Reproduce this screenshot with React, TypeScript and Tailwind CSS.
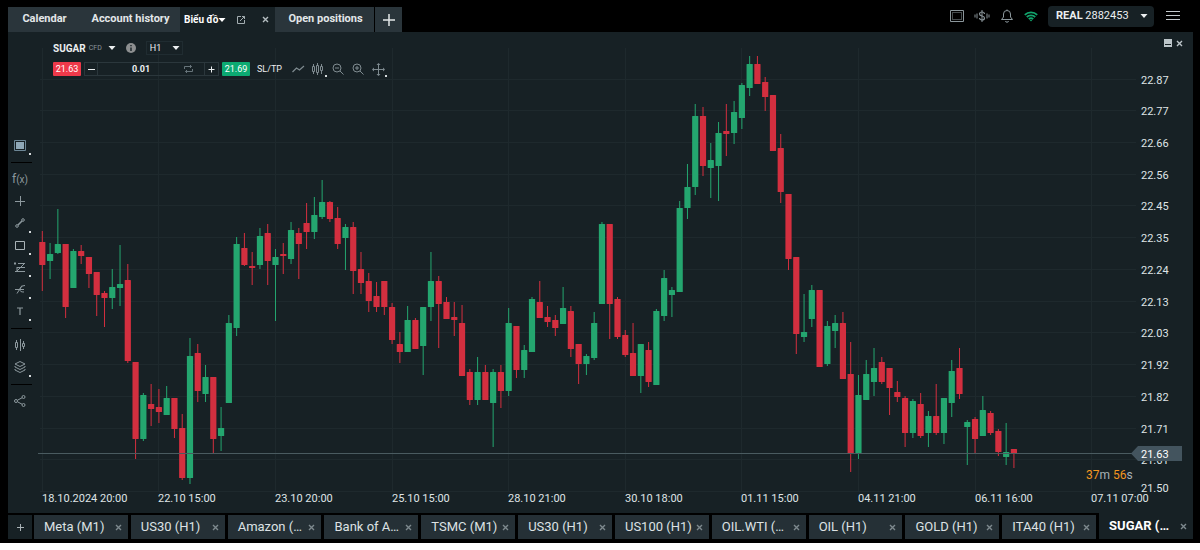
import { ReactNode } from 'react';

type Candle = [dir: 'u' | 'd', high: number, top: number, bottom: number, low: number];

const CANDLES: Candle[] = [
  ['d', 231, 242, 265, 291], ['u', 243, 254, 261, 279], ['u', 209, 244, 253, 254], ['d', 244, 244, 307, 318],
  ['u', 249, 251, 288, 288], ['d', 245, 251, 256, 264], ['d', 257, 257, 274, 288], ['d', 272, 272, 295, 316],
  ['d', 291, 293, 298, 327], ['u', 269, 287, 298, 309], ['u', 245, 284, 288, 306], ['d', 264, 280, 361, 363],
  ['d', 362, 362, 439, 459], ['u', 393, 395, 439, 441], ['d', 384, 404, 409, 426], ['d', 389, 407, 412, 423],
  ['u', 386, 398, 415, 415], ['d', 398, 398, 429, 438], ['d', 414, 428, 478, 480], ['u', 338, 356, 478, 484],
  ['d', 344, 353, 391, 402], ['u', 365, 377, 394, 402], ['d', 377, 377, 439, 454], ['u', 407, 428, 436, 451],
  ['u', 315, 323, 403, 403], ['u', 237, 244, 328, 336], ['d', 233, 248, 265, 266], ['d', 252, 266, 268, 285],
  ['u', 228, 236, 265, 269], ['d', 224, 233, 261, 285], ['u', 249, 257, 265, 321], ['d', 243, 254, 256, 274],
  ['u', 222, 230, 259, 264], ['d', 228, 233, 244, 279], ['d', 203, 223, 232, 249], ['u', 197, 215, 232, 239],
  ['u', 180, 202, 217, 219], ['d', 201, 202, 219, 222], ['d', 207, 218, 244, 249], ['u', 224, 227, 238, 270],
  ['d', 222, 227, 271, 294], ['d', 252, 269, 283, 294], ['d', 273, 281, 301, 312], ['d', 282, 296, 307, 312],
  ['d', 281, 281, 307, 315], ['d', 303, 307, 340, 344], ['d', 332, 344, 352, 363], ['u', 306, 320, 352, 352],
  ['d', 318, 320, 349, 349], ['u', 307, 307, 346, 375], ['u', 252, 281, 307, 321], ['d', 276, 281, 304, 348],
  ['d', 297, 302, 319, 319], ['d', 302, 317, 320, 336], ['d', 305, 323, 376, 376], ['d', 369, 372, 400, 405],
  ['u', 357, 372, 400, 405], ['d', 365, 372, 400, 400], ['u', 369, 372, 403, 447], ['d', 365, 372, 391, 408],
  ['u', 308, 323, 391, 396], ['d', 326, 326, 370, 378], ['u', 345, 350, 370, 378], ['u', 297, 299, 352, 352],
  ['d', 281, 302, 318, 318], ['d', 306, 317, 322, 327], ['d', 315, 320, 328, 336], ['u', 287, 308, 324, 324],
  ['d', 306, 311, 349, 357], ['d', 344, 344, 364, 384], ['u', 354, 356, 364, 375], ['u', 312, 323, 358, 360],
  ['u', 222, 224, 304, 304], ['d', 224, 224, 304, 339], ['d', 297, 299, 337, 339], ['d', 330, 335, 355, 357],
  ['d', 323, 353, 376, 376], ['u', 344, 344, 376, 393], ['d', 342, 350, 382, 387], ['u', 309, 311, 385, 385],
  ['u', 270, 278, 316, 321], ['u', 287, 290, 295, 317], ['u', 201, 208, 292, 292], ['u', 164, 187, 208, 219],
  ['u', 104, 116, 187, 195], ['d', 107, 116, 166, 176], ['u', 143, 160, 168, 198], ['u', 122, 133, 166, 201],
  ['d', 104, 131, 134, 156], ['u', 101, 112, 133, 144], ['u', 83, 85, 118, 129], ['u', 56, 64, 88, 96],
  ['d', 56, 64, 84, 84], ['d', 77, 82, 97, 111], ['d', 95, 95, 151, 151], ['d', 134, 148, 192, 203],
  ['d', 194, 194, 259, 270], ['d', 257, 257, 334, 354], ['u', 294, 332, 337, 342], ['u', 285, 290, 319, 327],
  ['d', 290, 290, 367, 367], ['u', 321, 326, 364, 366], ['u', 315, 323, 331, 348], ['d', 312, 323, 379, 379],
  ['d', 342, 374, 454, 472], ['u', 375, 395, 453, 459], ['u', 360, 374, 400, 400], ['u', 348, 368, 382, 396],
  ['d', 357, 362, 382, 384], ['d', 368, 368, 388, 415], ['d', 381, 392, 397, 402], ['d', 396, 398, 433, 447],
  ['u', 399, 401, 433, 438], ['d', 393, 404, 436, 438], ['u', 411, 416, 433, 447], ['d', 384, 416, 433, 435],
  ['u', 398, 398, 433, 444], ['u', 360, 371, 403, 417], ['d', 348, 368, 394, 399], ['u', 420, 422, 427, 465],
  ['d', 417, 419, 439, 453], ['u', 396, 410, 436, 436], ['d', 411, 413, 433, 435], ['d', 429, 431, 452, 456],
  ['u', 423, 452, 457, 465], ['d', 449, 449, 454, 468],
];

const PRICES = ['22.87', '22.77', '22.66', '22.56', '22.45', '22.35', '22.24', '22.13', '22.03', '21.92', '21.82', '21.71', '21.61'];

const TIMES = [
  '18.10.2024 20:00', '22.10 15:00', '23.10 20:00', '25.10 15:00', '28.10 21:00',
  '30.10 18:00', '01.11 15:00', '04.11 21:00', '06.11 16:00', '07.11 07:00',
];

const CHART_TABS = [
  'Meta (M1)', 'US30 (H1)', 'Amazon (…', 'Bank of A…', 'TSMC (M1)', 'US30 (H1)',
  'US100 (H1)', 'OIL.WTI (…', 'OIL (H1)', 'GOLD (H1)', 'ITA40 (H1)', 'SUGAR (…',
];

const START_X = 42.3;
const CANDLE_STEP = 7.773;
const TIME_STEP = CANDLE_STEP * 15;
const PRICE_TOP = 79.5;
const PRICE_STEP = 31.74;

interface IconProps {
  width?: number;
  height?: number;
  className?: string;
  children: ReactNode;
}

const Icon = ({ width = 14, height = 14, className = '', children }: IconProps) => (
  <svg
    width={width}
    height={height}
    viewBox={`0 0 ${width} ${height}`}
    fill="none"
    stroke="currentColor"
    strokeWidth="1"
    className={`shrink-0 ${className}`}
    aria-hidden="true"
  >
    {children}
  </svg>
);

const Caret = ({ className = '' }: { className?: string }) => (
  <Icon width={8} height={4} className={className}>
    <path d="M.5 0h7L4 4z" fill="currentColor" stroke="none" />
  </Icon>
);

const Cross = ({ className = '' }: { className?: string }) => (
  <Icon width={7} height={7} className={className}>
    <path d="M1 1l5 5M6 1L1 6" strokeWidth="1.4" />
  </Icon>
);

const PriceChart = () => (
  <svg viewBox="32 32 1161 481" className="block w-full" role="img" aria-label="SUGAR H1 price chart">
    <g stroke="#1e292d">
      {PRICES.map((price, i) => (
        <path key={price} d={`M40 ${Math.round(PRICE_TOP + i * PRICE_STEP) - 0.5}H1136`} />
      ))}
      <path d="M40 491.5H1136" />
      {TIMES.map((time, i) => (
        <path key={time} d={`M${Math.floor(START_X + i * TIME_STEP) + 0.5} 48V491`} />
      ))}
    </g>
    {CANDLES.map(([dir, high, top, bottom, low], i) => {
      const x = START_X + i * CANDLE_STEP;
      return (
        <g key={i} fill={dir === 'u' ? '#24a66f' : '#d32f3f'}>
          <rect x={x - 0.5} y={high} width="1" height={low - high} />
          <rect x={x - 3.1} y={top} width="6.2" height={bottom - top} rx="0.5" />
        </g>
      );
    })}
    <path d="M38 453.5H1133" stroke="#4a5b60" />
    <g fill="#dfe4e6" className="text-[11px]">
      {PRICES.map((price, i) => (
        <text key={price} x="1141" y={Math.round(PRICE_TOP + i * PRICE_STEP) + 4}>
          {price}
        </text>
      ))}
      <text x="1141" y="492">21.50</text>
      {TIMES.map((time, i) => (
        <text key={time} x={Math.floor(START_X + i * TIME_STEP)} y="502">
          {time}
        </text>
      ))}
      <path d="M1131 453.5l7-7.5h44v15h-44z" fill="#43545e" />
      <text x="1141" y="458" fill="#fff">21.63</text>
    </g>
    <text x="1086" y="479" fill="#a7b1b5" className="text-[12px]">
      <tspan fill="#f3961f">37</tspan>m <tspan fill="#f3961f">56</tspan>s
    </text>
  </svg>
);

interface ToolProps {
  label: string;
  hasMenu?: boolean;
  children: ReactNode;
}

const Tool = ({ label, hasMenu, children }: ToolProps) => (
  <button type="button" aria-label={label} className="relative flex h-[22px] w-6 items-center justify-center text-[#8d999e]">
    {children}
    {hasMenu && <span className="absolute right-px bottom-px size-0.5 bg-[#d5dadc]" />}
  </button>
);

const Divider = () => (
  <div className="flex h-3 w-full items-center pl-[3px]">
    <div className="h-px w-full bg-black" />
  </div>
);

const Sidebar = () => (
  <aside className="flex w-6 shrink-0 flex-col pt-[102px]">
    <Tool label="Chart layout" hasMenu>
      <Icon width={12} height={11}>
        <path d="M.5.5h11v10H.5z" stroke="#6d8796" />
        <path d="M2 2h8v7H2z" fill="#8fa9b8" stroke="none" />
      </Icon>
    </Tool>
    <Divider />
    <Tool label="Indicators">
      <span className="text-[12px] leading-none">f<span className="text-[10px]">(x)</span></span>
    </Tool>
    <Tool label="Crosshair">
      <Icon width={10} height={10}><path d="M5.5 0v10M0 5.5h10" /></Icon>
    </Tool>
    <Tool label="Trend line" hasMenu>
      <Icon width={10} height={10}>
        <path d="M3 7l4-4" strokeWidth="1.6" />
        <circle cx="2" cy="8" r="1.3" />
        <circle cx="8" cy="2" r="1.3" />
      </Icon>
    </Tool>
    <Tool label="Shapes" hasMenu>
      <Icon width={10} height={9}><path d="M.5.5h9v8h-9z" stroke="#a9b3b7" /></Icon>
    </Tool>
    <Tool label="Fibonacci" hasMenu>
      <Icon width={12} height={10}>
        <path d="M0 1.5h2M1 0v3M4 1.5h7M3 5.5h8M1 9.5h10M10 2L3 9M3 5v4" />
      </Icon>
    </Tool>
    <Tool label="Pitchfork" hasMenu>
      <Icon width={11} height={10}>
        <path d="M0 5.5h9M7 1.500L2 9.500M10 1.500c-3 0-5 2-5 4s1 2.500 4 2.500" />
      </Icon>
    </Tool>
    <Tool label="Text" hasMenu>
      <Icon width={8} height={8}><path d="M1 1h6M4 1v7" strokeWidth="1.2" /></Icon>
    </Tool>
    <Divider />
    <Tool label="Chart type">
      <Icon width={12} height={12}>
        <path d="M2.500 1v2M2.500 9v2M1.500 3.500h2v5h-2zM6.500 0v12M9.500 2v2M9.500 8v2M8.500 4.500h2v3h-2z" />
      </Icon>
    </Tool>
    <Tool label="Layers" hasMenu>
      <Icon width={12} height={12}>
        <path d="M6 .5L11 3 6 5.500 1 3zM1 5v1l5 2.500L11 6V5M1 8v1l5 2.500L11 9V8" />
      </Icon>
    </Tool>
    <Divider />
    <Tool label="Share">
      <Icon width={12} height={12}>
        <circle cx="2" cy="6" r="1.500" />
        <circle cx="9.500" cy="2" r="1.500" />
        <circle cx="9.500" cy="10" r="1.500" />
        <path d="M3.500 5.200l4.500-2.400M3.500 6.800l4.500 2.400" />
      </Icon>
    </Tool>
  </aside>
);

const Header = () => (
  <header className="flex h-8 items-end justify-between pr-5 pl-2">
    <nav className="flex h-[25px] text-[11px] font-bold text-[#e3e7e9]">
      <button type="button" className="w-[73px] bg-[#2a353b]">Calendar</button>
      <button type="button" className="w-[99px] bg-[#2a353b]">Account history</button>
      <div className="flex w-[95px] items-center bg-[#172125] pr-1.5 pl-1 text-white">
        <button type="button" className="flex items-center text-[10px]">
          Biểu đồ
          <Caret />
        </button>
        <button type="button" aria-label="Detach" className="ml-auto text-[#a3adb1]">
          <Icon width={10} height={10}>
            <path d="M5 1.500H1.500v7h7V5M4 6l4.500-4.500M6 1.500h2.500V4" />
          </Icon>
        </button>
        <button type="button" aria-label="Close" className="ml-4 text-[#b4bdc0]">
          <Cross />
        </button>
      </div>
      <button type="button" className="w-[99px] bg-[#2a353b] pl-0.5">Open positions</button>
      <button type="button" aria-label="Add tab" className="ml-px flex w-[27px] items-center justify-center bg-[#2a353b]">
        <Icon width={12} height={12}><path d="M6 0v12M0 6h12" strokeWidth="1.500" /></Icon>
      </button>
    </nav>

    <div className="flex h-full items-center gap-2.5 text-[#8b969b]">
      <button type="button" aria-label="Layout">
        <Icon height={13}>
          <path d="M.5.5h13v11H.5z" />
          <path d="M2.500 2.500h9v7h-9z" strokeDasharray="1 1" />
        </Icon>
      </button>
      <button type="button" aria-label="Signals">
        <Icon width={16}>
          <path d="M1 5.500v3M3 4.500v5M13 4.500v5M15 5.500v3M8 1v12" />
          <path d="M10.500 5c0-1-1-2-2.500-2S5.500 4 5.500 5s1 1.700 2.500 2 2.500 1 2.500 2-1 2-2.500 2-2.500-1-2.500-2" strokeWidth="1.200" />
        </Icon>
      </button>
      <button type="button" aria-label="Notifications">
        <Icon>
          <path d="M1.500 10.500h11L10.500 8V5a3.500 3.500 0 0 0-7 0v3zM5.500 12a1.500 1.200 0 0 0 3 0M7 .500v1" />
        </Icon>
      </button>
      <button type="button" aria-label="Connection" className="text-[#12a56d]">
        <Icon height={11}>
          <path d="M.8 3.800a9 9 0 0 1 12.400 0M2.800 6a6 6 0 0 1 8.400 0M4.800 8.200a3.200 3.200 0 0 1 4.400 0" strokeWidth="1.800" />
          <path d="M5.500 8.800h3L7 10.500z" fill="currentColor" stroke="none" />
        </Icon>
      </button>
      <button type="button" className="flex h-[21px] w-[106px] items-center justify-between rounded-sm bg-[#172125] pr-1.5 pl-2 text-[11px] text-[#eceff0]">
        <span><b>REAL</b> 2882453</span>
        <Caret />
      </button>
      <button type="button" aria-label="Menu" className="ml-0.5 text-[#c3c9cc]">
        <Icon height={10}><path d="M0 .5h14M0 4.500h14M0 8.500h14" /></Icon>
      </button>
    </div>
  </header>
);

const SymbolBar = () => (
  <div className="absolute top-2 left-[21px] flex flex-col gap-1.5 text-[9px] text-[#eceff0]">
    <div className="flex h-4 items-center">
      <button type="button" className="flex items-center">
        <b className="text-[10px]">SUGAR</b>
        <span className="ml-[3px] text-[7px] text-[#8b969b]">CFD</span>
        <Caret className="ml-1.5" />
      </button>
      <button type="button" aria-label="Instrument info" className="ml-2.5">
        <Icon width={10} height={10}>
          <circle cx="5" cy="5" r="5" fill="#8d8f90" stroke="none" />
          <path d="M5 4.500V8M5 2v1.300" stroke="#172125" strokeWidth="1.400" />
        </Icon>
      </button>
      <div className="relative ml-2.5">
        <select aria-label="Timeframe" className="block h-[14px] w-[37px] appearance-none border border-[#202c31] pl-[3px] leading-none">
          <option>H1</option>
        </select>
        <Caret className="pointer-events-none absolute top-[5px] right-[3px]" />
      </div>
    </div>
    <div className="flex h-[14px] items-center">
      <button type="button" className="h-[14px] w-7 rounded-[1px] bg-[#ee394a] leading-none text-white">21.63</button>
      <div className="ml-[3px] flex h-[14px] w-[135px] border border-[#2b373c]">
        <button type="button" aria-label="Decrease" className="flex w-[13px] items-center justify-center border-r border-[#2b373c]">
          <Icon width={7} height={7}><path d="M0 3.500h7" /></Icon>
        </button>
        <input aria-label="Volume" defaultValue="0.01" className="w-0 flex-1 text-center leading-none font-bold" />
        <span className="flex w-4 items-center text-[#67747a]">
          <Icon width={9} height={8}>
            <path d="M.5 4V1.500h7M6 0l1.500 1.500L6 3M8.500 4v2.500h-7M3 5L1.500 6.500 3 8" />
          </Icon>
        </span>
        <button type="button" aria-label="Increase" className="ml-1 flex w-[14px] items-center justify-center border-l border-[#2b373c]">
          <Icon width={7} height={7}><path d="M3.500.5v6M.5 3.500h6" /></Icon>
        </button>
      </div>
      <button type="button" className="ml-[3px] h-[14px] w-7 rounded-[1px] bg-[#0caa72] leading-none text-white">21.69</button>
      <button type="button" className="ml-[7px] w-7 text-left leading-none whitespace-nowrap">SL/TP</button>
      <div className="ml-1.5 flex gap-1.5 text-[#7f8b90]">
        <button type="button" aria-label="Line chart">
          <Icon><path d="M1.500 10l4-4 3 2 4.500-4" strokeWidth="1.200" /></Icon>
        </button>
        <button type="button" aria-label="Candlestick chart" className="relative">
          <Icon>
            <path d="M2.500 2v2M2.500 10v2M1.500 4.500h2v5h-2zM6.500 1v2M6.500 11v2M5.500 3.500h2v7h-2zM10.500 2v2M10.500 9v3M9.500 4.500h2v4h-2z" />
          </Icon>
          <span className="absolute -right-0.5 -bottom-px size-0.5 bg-[#d5dadc]" />
        </button>
        <button type="button" aria-label="Zoom out">
          <Icon><circle cx="6" cy="6" r="4" /><path d="M4 6h4M9 9l3.500 3.500" /></Icon>
        </button>
        <button type="button" aria-label="Zoom in">
          <Icon><circle cx="6" cy="6" r="4" /><path d="M4 6h4M6 4v4M9 9l3.500 3.500" /></Icon>
        </button>
        <button type="button" aria-label="Pan" className="relative">
          <Icon>
            <path d="M7.500 2v10M2 7.500h11" />
            <path d="M7.500 1l2 2h-4zM7.500 14l2-2h-4zM1 7.500l2-2v4zM14 7.500l-2-2v4z" fill="currentColor" stroke="none" />
          </Icon>
          <span className="absolute -right-0.5 -bottom-px size-0.5 bg-[#d5dadc]" />
        </button>
      </div>
    </div>
  </div>
);

const ChartTabs = () => (
  <footer className="flex h-[30px] pr-[7px] pb-1 pl-2">
    <div className="flex flex-1 items-end gap-[3px]">
      <button type="button" aria-label="New chart" className="-mr-px flex h-6 w-6 items-center justify-center bg-[#172125] text-[#a9b2b6]">
        <Icon width={9} height={9}><path d="M4.500 1v7M1 4.500h7" /></Icon>
      </button>
      {CHART_TABS.map((tab, i) => {
        const isActive = i === CHART_TABS.length - 1;
        return (
          <div
            key={i}
            className={`flex min-w-0 flex-1 basis-0 items-center justify-between pr-1.5 pl-2.5 ${
              isActive ? 'h-full bg-[#172125] font-bold text-white' : 'h-6 bg-[#253036] text-[#dde2e4]'
            }`}
          >
            <button type="button" className="text-[13px] leading-5 whitespace-nowrap">{tab}</button>
            <button type="button" aria-label={`Close ${tab}`} className="text-[#7d898e]">
              <Cross />
            </button>
          </div>
        );
      })}
    </div>
  </footer>
);

const App = () => {
  return (
    <div className="bg-black font-[Roboto,'Liberation_Sans',sans-serif]">
      <Header />
      <main className="mr-[7px] ml-2 flex bg-[#172125]">
        <Sidebar />
        <section className="relative min-w-0 flex-1">
          <PriceChart />
          <SymbolBar />
          <div className="absolute top-[7px] right-2.5 flex items-center gap-1 text-[#bcc5c9]">
            <button type="button" aria-label="Minimize">
              <Icon width={8} height={8}>
                <path d="M0 0h8v8H0z" fill="currentColor" stroke="none" />
                <path d="M1 5.500h6" stroke="#172125" />
              </Icon>
            </button>
            <button type="button" aria-label="Close chart">
              <Cross />
            </button>
          </div>
        </section>
      </main>
      <ChartTabs />
    </div>
  );
};

export default App;
